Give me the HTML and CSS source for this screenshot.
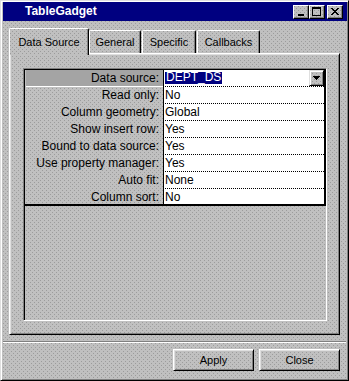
FILE: index.html
```html
<!DOCTYPE html>
<html lang="en">

<head>
    <meta charset="UTF-8" />
    <title>TableGadget</title>
    <link rel="stylesheet" href="styles.css">
</head>

<body>
    <div class="window dither">
        <div class="titlebar">
            <span class="title">TableGadget</span>
            <div class="caption">
                <div class="cap-btn dither">
                    <svg width="14" height="12" shape-rendering="crispEdges"><rect x="4" y="8" width="6" height="2" fill="#000" /></svg>
                </div>
                <div class="cap-btn dither">
                    <svg width="14" height="12" shape-rendering="crispEdges"><rect x="2.5" y="1.5" width="8" height="8" fill="none" stroke="#000" /><rect x="2" y="1" width="9" height="2" fill="#000" /></svg>
                </div>
                <div class="cap-btn close dither">
                    <svg width="14" height="12" shape-rendering="crispEdges">
                        <path d="M3 2h2v1h1v1h2v-1h1v-1h2v1h-1v1h-1v1h-1v1h1v1h1v1h1v1h-2v-1h-1v-1h-2v1h-1v1h-2v-1h1v-1h1v-1h1v-1h-1v-1h-1v-1h-1z" fill="#000" />
                    </svg>
                </div>
            </div>
        </div>

        <div class="tabs">
            <div class="tab active dither">Data Source</div>
            <div class="tab dither tab-general">General</div>
            <div class="tab dither tab-specific">Specific</div>
            <div class="tab dither tab-callbacks">Callbacks</div>
        </div>

        <div class="panel dither">
            <div class="sunken">
                <div class="props">
                    <div class="row">
                        <div class="label current">Data source:</div>
                        <div class="value">
                            <span class="selected">DEPT_DS</span>
                            <div class="drop dither">
                                <svg width="13" height="14" shape-rendering="crispEdges"><path d="M3 5h7v1h-1v1h-1v1h-1v1h-1v-1h-1v-1h-1v-1h-1z" fill="#000" /></svg>
                            </div>
                        </div>
                    </div>
                    <div class="row">
                        <div class="label">Read only:</div>
                        <div class="value">No</div>
                    </div>
                    <div class="row">
                        <div class="label">Column geometry:</div>
                        <div class="value">Global</div>
                    </div>
                    <div class="row">
                        <div class="label">Show insert row:</div>
                        <div class="value">Yes</div>
                    </div>
                    <div class="row">
                        <div class="label">Bound to data source:</div>
                        <div class="value">Yes</div>
                    </div>
                    <div class="row">
                        <div class="label">Use property manager:</div>
                        <div class="value">Yes</div>
                    </div>
                    <div class="row">
                        <div class="label">Auto fit:</div>
                        <div class="value">None</div>
                    </div>
                    <div class="row last">
                        <div class="label">Column sort:</div>
                        <div class="value">No</div>
                    </div>
                </div>
            </div>
        </div>

        <div class="separator"></div>

        <div class="actions">
            <button class="btn dither">Apply</button>
            <button class="btn dither">Close</button>
        </div>
    </div>
</body>

</html>
```

FILE: styles.css
```css
body {
    margin: 0;
    font-family: "Liberation Sans", Arial, sans-serif;
    color: #000;
}

.dither {
    background-color: #c0c0c0;
    background-image:
        conic-gradient(at 1px 1px, transparent 75%, #9c9c9c 0),
        conic-gradient(at 1px 1px, transparent 75%, #9c9c9c 0);
    background-size: 4px 4px;
    background-position: 0 0, 2px 2px;
}

.window {
    width: 349px;
    height: 381px;
    box-sizing: border-box;
    border: 1px solid;
    border-color: #dfdfdf #000 #000 #dfdfdf;
    box-shadow: inset 1px 1px #fff, inset -1px -1px #808080;
    padding: 1px 1px 0 2px;
}

.titlebar {
    height: 19px;
    background: #000080;
    display: flex;
    justify-content: space-between;
    padding: 0 4px 0 22px;
}

.title {
    color: #fff;
    font-weight: bold;
    font-size: 12px;
    line-height: 19px;
}

.caption {
    display: flex;
    margin-top: 3px;
}

.cap-btn {
    width: 16px;
    height: 14px;
    box-sizing: border-box;
    border: 1px solid;
    border-color: #fff #000 #000 #fff;
    box-shadow: inset -1px -1px #808080;
}

.cap-btn svg {
    display: block;
}

.cap-btn.close {
    margin-left: 2px;
}

.tabs {
    display: flex;
    align-items: flex-end;
    height: 25px;
    margin-top: 7px;
    padding-left: 6px;
    position: relative;
    z-index: 1;
}

.tab {
    box-sizing: border-box;
    height: 23px;
    border: 1px solid;
    border-bottom: none;
    border-color: #fff #000 #000 #fff;
    border-radius: 2px 2px 0 0;
    box-shadow: inset -1px 0 #808080;
    font-size: 11px;
    line-height: 13px;
    padding-top: 5px;
    text-align: center;
}

.tab.active {
    width: 80px;
    height: 27px;
    margin-bottom: -2px;
    padding-top: 7px;
}

.tab-general {
    width: 52px;
}

.tab-specific {
    width: 54px;
    margin-left: 1px;
}

.tab-callbacks {
    width: 63px;
    margin-left: 1px;
}

.panel {
    width: 331px;
    height: 282px;
    box-sizing: border-box;
    margin-left: 6px;
    border: 1px solid;
    border-color: #fff #000 #000 #fff;
    box-shadow: inset 1px 1px #dfdfdf, inset -1px -1px #808080;
    padding: 14px 0 0 13px;
}

.sunken {
    width: 304px;
    height: 253px;
    box-sizing: border-box;
    border: 1px solid;
    border-color: #808080 #fff #fff #808080;
    box-shadow: inset 1px 1px #000;
    padding: 1px 0 0 1px;
}

.props {
    width: 299px;
    border-right: 2px solid #000;
    border-bottom: 2px solid #000;
    font-size: 12px;
}

.row {
    display: flex;
    height: 17px;
}

.row.last {
    height: 15px;
}

.label {
    width: 138px;
    box-sizing: border-box;
    padding-right: 4px;
    text-align: right;
    line-height: 16px;
}

.label.current {
    background: #a4a4a4;
    border-bottom: 1px solid #fff;
    margin-left: 1px;
    width: 137px;
}

.value {
    flex: 1;
    position: relative;
    background: #fff;
    border-left: 1px solid #000;
    border-bottom: 1px dotted #000;
    padding-left: 1px;
    line-height: 16px;
}

.row.last .value {
    border-bottom: none;
}

.selected {
    display: inline-block;
    background: #000080;
    color: #fff;
    height: 12px;
    line-height: 10px;
    padding: 0 1px;
    vertical-align: 1px;
}

.drop {
    position: absolute;
    top: 0;
    right: 0;
    width: 15px;
    height: 16px;
    box-sizing: border-box;
    border: 1px solid;
    border-color: #dfdfdf #000 #000 #dfdfdf;
    box-shadow: inset 1px 1px #fff, inset -1px -1px #808080;
}

.drop svg {
    display: block;
}

.separator {
    height: 1px;
    margin: 6px 1px 0 0;
    background: #808080;
    border-bottom: 1px solid #fff;
}

.actions {
    display: flex;
    justify-content: flex-end;
    gap: 5px;
    margin-top: 6px;
    padding-right: 7px;
}

.btn {
    width: 81px;
    height: 22px;
    box-sizing: border-box;
    border: 1px solid;
    border-color: #fff #000 #000 #fff;
    box-shadow: inset 1px 1px #dfdfdf, inset -1px -1px #808080;
    font-family: "Liberation Sans", Arial, sans-serif;
    font-size: 11px;
    padding: 0;
    color: #000;
}
```
